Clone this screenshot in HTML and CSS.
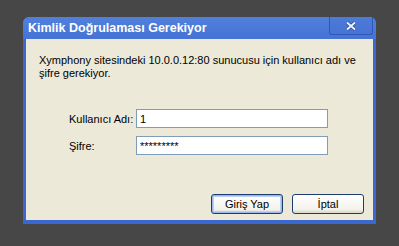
FILE: index.html
```html
<!DOCTYPE html>
<html lang="tr">
<head>
    <meta charset="UTF-8">
    <meta name="viewport" content="width=device-width, initial-scale=1.0">
    <title>Kimlik Doğrulaması Gerekiyor</title>

    <link rel="stylesheet" href="styles.css">
</head>
<body>

    <div class="dialog">
        <!-- Title bar -->
        <div class="titlebar">
            <span class="title">Kimlik Doğrulaması Gerekiyor</span>
            <button class="close-btn" type="button">
                <svg width="12" height="10" viewBox="0 0 12 10">
                    <path d="M2 1.5 L10 8.5 M10 1.5 L2 8.5" stroke="#2a4f9e" stroke-width="3.4" fill="none"/>
                    <path d="M2 1.5 L10 8.5 M10 1.5 L2 8.5" stroke="#f2f5fc" stroke-width="1.8" fill="none"/>
                </svg>
            </button>
        </div>

        <div class="dialog-body">
            <p class="message">Xymphony sitesindeki 10.0.0.12:80 sunucusu için kullanıcı adı ve şifre gerekiyor.</p>

            <div class="form">
                <label class="field-label" for="username">Kullanıcı Adı:</label>
                <input class="field" type="text" id="username" value="1">
                <label class="field-label" for="password">Şifre:</label>
                <!-- masked value shown as asterisks like the XP control -->
                <input class="field" type="text" id="password" value="*********">
            </div>

            <div class="buttons">
                <button class="btn default" type="button">Giriş Yap</button>
                <button class="btn" type="button">İptal</button>
            </div>
        </div>
    </div>

</body>
</html>
```
FILE: styles.css
```css
body {
    margin: 0;
    padding: 0;
    background-color: #474747;  /* dark backdrop */
    font-family: 'Liberation Sans', Arial, sans-serif;
    font-size: 11px;
    color: #000;
}

.dialog {
    width: 347px;
    margin: 17px 0 0 23px;
    padding: 0 3px 4px 3px;
    background: #3a68cf;  /* XP blue frame */
    border-radius: 6px 6px 0 0;
}

.titlebar {
    height: 22px;
    display: flex;
    justify-content: space-between;
    align-items: flex-start;
    background: linear-gradient(#5180dc, #4573d6);
    margin: 0 -3px;
    padding: 0 3px 0 4px;
    border-radius: 6px 6px 0 0;
}

.title {
    color: #fff;
    font-weight: bold;
    font-size: 12.5px;
    line-height: 22px;
    padding-left: 1px;
}

.close-btn {
    width: 44px;
    height: 18px;
    margin-top: 0;
    padding: 0;
    background: linear-gradient(#4d7bd9, #4673d4);
    border: 1px solid #2f58b6;
    border-top: none;
    border-radius: 0 0 3px 3px;
    display: flex;
    justify-content: center;
    align-items: center;
}

.dialog-body {
    height: 181px;
    background-color: #ece9d8;  /* XP dialog face */
    padding: 15px 9px 0 13px;
    box-sizing: border-box;
}

.message {
    margin: 0;
    line-height: 13px;
    width: 325px;
}

.form {
    display: grid;
    grid-template-columns: 67px 192px;
    row-gap: 8px;
    align-items: center;
    margin: 29px 0 0 30px;
}

.field {
    height: 19px;
    box-sizing: border-box;
    border: 1px solid #7f9db9;
    background: #fff;
    padding: 0 3px;
    margin: 0;
    font-family: 'Liberation Sans', Arial, sans-serif;
    font-size: 11px;
}

.buttons {
    display: flex;
    justify-content: flex-end;
    gap: 9px;
    margin-top: 39px;
}

.btn {
    width: 72px;
    height: 20px;
    padding: 0;
    font-family: 'Liberation Sans', Arial, sans-serif;
    font-size: 11px;
    color: #000;
    background: linear-gradient(#ffffff, #f3f2ec 80%, #d8d5c8);
    border: 1px solid #1c3d6e;
    border-radius: 3px;
}

.btn.default {
    box-shadow: inset 0 0 0 1px #9cb7ec, inset 0 0 0 2px #bcd0f5;
}
```
